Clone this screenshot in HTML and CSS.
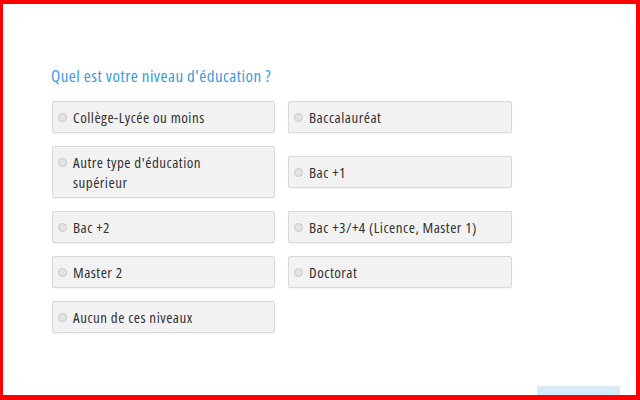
FILE: index.html
```html
<!DOCTYPE html>
<html lang="fr">
<head>
<meta charset="utf-8">
<title>Niveau d'éducation</title>
<link rel="stylesheet" href="styles.css">
</head>
<body>
<div class="frame">
  <div class="content">
    <h2 class="question">Quel est votre niveau d'éducation ?</h2>
    <div class="options">
      <label class="option"><span class="radio"></span><span class="text">Collège-Lycée ou moins</span></label>
      <label class="option"><span class="radio"></span><span class="text">Baccalauréat</span></label>
      <label class="option"><span class="radio"></span><span class="text">Autre type d'éducation<br>supérieur</span></label>
      <label class="option"><span class="radio"></span><span class="text">Bac +1</span></label>
      <label class="option"><span class="radio"></span><span class="text">Bac +2</span></label>
      <label class="option"><span class="radio"></span><span class="text">Bac +3/+4 (Licence, Master 1)</span></label>
      <label class="option"><span class="radio"></span><span class="text">Master 2</span></label>
      <label class="option"><span class="radio"></span><span class="text">Doctorat</span></label>
      <label class="option"><span class="radio"></span><span class="text">Aucun de ces niveaux</span></label>
    </div>
    <div class="actions"><span class="next"></span></div>
  </div>
</div>
</body>
</html>
```
FILE: styles.css
```css
* { box-sizing: border-box; }
html, body { margin: 0; padding: 0; }
body { background: #fff; font-family: "Open Sans", "Liberation Sans", sans-serif; }
.frame {
  width: 640px;
  height: 400px;
  border: 4px solid #ff0000;
  border-left-width: 3px;
  border-bottom-width: 5px;
  overflow: hidden;
  background: #fff;
}
.content {
  padding: 60px 0 0 48px;
}
.question {
  margin: 0 0 13px 0;
  font-weight: 400;
  font-size: 17px;
  line-height: 24px;
  letter-spacing: 0.45px;
  color: #3a9ad9;
  font-stretch: condensed;
}
.options {
  display: grid;
  grid-template-columns: 223px 224px;
  column-gap: 13px;
  row-gap: 13px;
  align-items: center;
  padding-left: 1px;
}
.option {
  display: flex;
  align-items: flex-start;
  background: #f2f2f2;
  border: 1px solid #d9d9d9;
  border-radius: 2px;
  padding: 5px 8px 5px 4px;
  box-shadow: 0 1px 1px rgba(0,0,0,0.04);
}
.radio {
  flex: none;
  width: 9px;
  height: 9px;
  margin: 6px 6px 0 1px;
  border-radius: 50%;
  background: #e2e2e2;
  border: 1px solid #c9c9c9;
}
.text {
  font-size: 15px;
  line-height: 20px;
  letter-spacing: 0.5px;
  color: #333;
  font-stretch: condensed;
}
.actions {
  display: flex;
  justify-content: flex-end;
  margin-top: 53px;
  padding-right: 16px;
}
.next {
  display: block;
  width: 83px;
  height: 20px;
  background: #d6ebf9;
}
```
